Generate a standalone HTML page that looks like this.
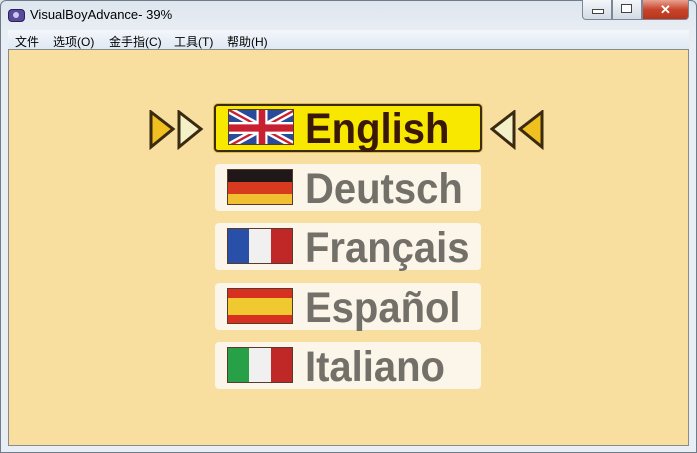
<!DOCTYPE html>
<html><head><meta charset="utf-8"><style>
body{margin:0;width:697px;height:453px;overflow:hidden;background:#dfe6ee;font-family:"Liberation Sans","Noto Sans CJK SC",sans-serif;position:relative}
.frame{position:absolute;left:0;top:0;width:695px;height:451px;border:1px solid #6f7d8b;border-radius:6px 6px 0 0;background:linear-gradient(#dde5ee,#e9eef4 30px,#e9eef4)}
.title{position:absolute;left:30px;top:7px;font-size:13px;color:#000}
.icon{position:absolute;left:8px;top:9px;width:15px;height:11px;background:#5a4a9a;border-radius:4px;border:1px solid #2a2060}
.icon:after{content:"";position:absolute;left:4px;top:2px;width:6px;height:6px;border-radius:50%;background:#c8c8f0}
.menu{position:absolute;left:8px;top:30px;width:681px;height:19px;background:linear-gradient(#f4f7fb,#dfe8f3);font-size:12px}
.menu span{position:absolute;top:3px}
.content{position:absolute;left:8px;top:49px;width:679px;height:395px;background:#f8dfa0;border:1px solid #8a8a8a}
.btns{position:absolute;top:0;right:8px;height:20px;display:flex}
.b{width:28px;height:19px;border:1px solid #7a8796;border-top:none;background:linear-gradient(#f4f6f9,#d4dbe4);position:relative}
.x{width:45px;background:linear-gradient(#e8a290,#c8452c 50%,#b8341c);border-radius:0 0 4px 0;color:#fff;text-align:center;font-weight:bold;font-size:13px;line-height:19px}
.row{position:absolute;left:215px;width:266px;height:47px;background:#fbf5ea;border-radius:4px}
.row.sel{background:#f8e800;border:2px solid #3a2a10;left:214px;width:264px;height:44px;box-shadow:0 0 0 1px #d8b850}
.flag{position:absolute;left:12px;top:5px;width:66px;height:36px;border:1px solid #5a3a2a;box-sizing:border-box;overflow:hidden}
.sel .flag{left:12px;top:3px}
.txt{position:absolute;left:90px;top:2px;font-weight:bold;font-size:43px;color:#727068;letter-spacing:0;transform:scaleX(0.93);transform-origin:left center;line-height:46px}
.sel .txt{color:#3a1808;left:89px;top:0px}
.tri{position:absolute;top:110px}
</style></head><body>
<div class="frame"></div>
<div class="icon"></div>
<div class="title">VisualBoyAdvance- 39%</div>
<div class="btns"><div class="b" style="border-radius:0 0 0 4px"><div style="position:absolute;left:9px;top:9px;width:10px;height:3px;border:1px solid #444;background:#fff"></div></div><div class="b"><div style="position:absolute;left:8px;top:4px;width:9px;height:7px;border:1px solid #444;background:#fff"></div></div><div class="b x">✕</div></div>
<div class="menu"><span style="left:7px">文件</span><span style="left:45px">选项(O)</span><span style="left:101px">金手指(C)</span><span style="left:166px">工具(T)</span><span style="left:219px">帮助(H)</span></div>
<div class="content"></div>
<svg class="tri" style="left:149px" width="56" height="40"><polygon points="2,2 24,19 2,37" fill="#f0c020" stroke="#3a2a10" stroke-width="3"/><polygon points="30,2 52,19 30,37" fill="#f4f0c8" stroke="#3a2a10" stroke-width="3"/></svg>
<svg class="tri" style="left:490px" width="56" height="40"><polygon points="24,2 2,19 24,37" fill="#f4f0c8" stroke="#3a2a10" stroke-width="3"/><polygon points="52,2 30,19 52,37" fill="#f0c020" stroke="#3a2a10" stroke-width="3"/></svg>
<div class="row sel" style="top:104px"><div class="flag"><svg width="66" height="36" viewBox="0 0 60 30" preserveAspectRatio="none"><rect width="60" height="30" fill="#2a4a9a"/><path d="M0,0 60,30 M60,0 0,30" stroke="#fff" stroke-width="6"/><path d="M0,0 60,30 M60,0 0,30" stroke="#c82030" stroke-width="2"/><path d="M30,0v30M0,15h60" stroke="#fff" stroke-width="10"/><path d="M30,0v30M0,15h60" stroke="#c82030" stroke-width="6"/></svg></div><div class="txt">English</div></div>
<div class="row" style="top:164px"><div class="flag"><div style="height:12px;background:#201818"></div><div style="height:12px;background:#d83a20"></div><div style="height:12px;background:#f0c030"></div></div><div class="txt">Deutsch</div></div>
<div class="row" style="top:223px"><div class="flag" style="display:flex"><div style="width:22px;background:#2850a8"></div><div style="width:22px;background:#f0f0f0"></div><div style="width:22px;background:#c02828"></div></div><div class="txt">Français</div></div>
<div class="row" style="top:283px"><div class="flag"><div style="height:9px;background:#d83020"></div><div style="height:17px;background:#f0c830"></div><div style="height:10px;background:#d83020"></div></div><div class="txt">Español</div></div>
<div class="row" style="top:342px"><div class="flag" style="display:flex"><div style="width:22px;background:#28a048"></div><div style="width:22px;background:#f0f0f0"></div><div style="width:22px;background:#c02828"></div></div><div class="txt">Italiano</div></div>
</body></html>
